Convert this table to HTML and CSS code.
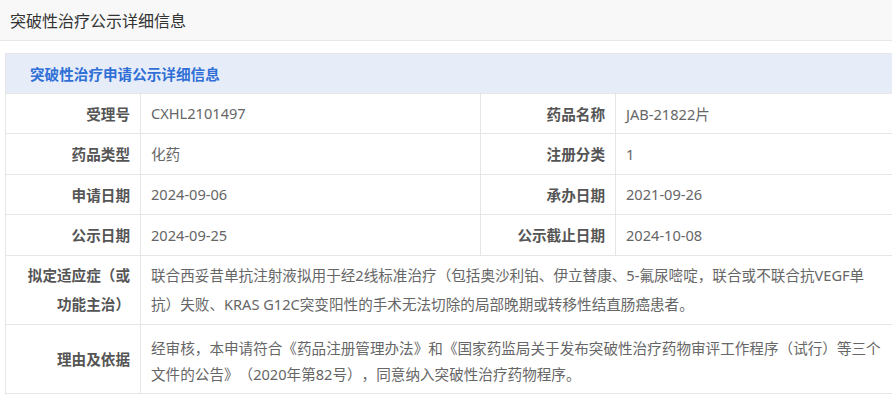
FILE: index.html
```html
<!DOCTYPE html>
<html lang="zh-CN">
<head>
<meta charset="utf-8">
<title>突破性治疗公示详细信息</title>
<link rel="stylesheet" href="styles.css">
</head>
<body>
<header class="topbar">突破性治疗公示详细信息</header>
<main class="content">
  <table class="detail">
    <colgroup>
      <col class="c-label">
      <col class="c-value">
      <col class="c-label">
      <col class="c-value2">
    </colgroup>
    <thead>
      <tr><th colspan="4" class="caption">突破性治疗申请公示详细信息</th></tr>
    </thead>
    <tbody>
      <tr class="row">
        <td class="label">受理号</td><td class="value">CXHL2101497</td>
        <td class="label">药品名称</td><td class="value">JAB-21822片</td>
      </tr>
      <tr class="row">
        <td class="label">药品类型</td><td class="value">化药</td>
        <td class="label">注册分类</td><td class="value">1</td>
      </tr>
      <tr class="row">
        <td class="label">申请日期</td><td class="value">2024-09-06</td>
        <td class="label">承办日期</td><td class="value">2021-09-26</td>
      </tr>
      <tr class="row">
        <td class="label">公示日期</td><td class="value">2024-09-25</td>
        <td class="label">公示截止日期</td><td class="value">2024-10-08</td>
      </tr>
      <tr class="row-multi">
        <td class="label">拟定适应症（或功能主治）</td>
        <td class="value" colspan="3">联合西妥昔单抗注射液拟用于经2线标准治疗（包括奥沙利铂、伊立替康、5-氟尿嘧啶，联合或不联合抗VEGF单<br>抗）失败、KRAS G12C突变阳性的手术无法切除的局部晚期或转移性结直肠癌患者。</td>
      </tr>
      <tr class="row-reason">
        <td class="label">理由及依据</td>
        <td class="value" colspan="3">经审核，本申请符合《药品注册管理办法》和《国家药监局关于发布突破性治疗药物审评工作程序（试行）等三个文件的公告》（2020年第82号），同意纳入突破性治疗药物程序。</td>
      </tr>
    </tbody>
  </table>
</main>
</body>
</html>
```

FILE: styles.css
```css
html, body {
  margin: 0;
  padding: 0;
  overflow: hidden;
  background: #ffffff;
}
body {
  font-family: "Noto Sans", "Noto Sans CJK SC", sans-serif;
  color: #333;
  text-spacing-trim: space-all;
}
.topbar {
  height: 40px;
  display: flex;
  align-items: center;
  padding-left: 10px;
  background: #f8f8f8;
  border-bottom: 1px solid #e8e8e8;
  font-size: 16px;
  color: #333;
}
.content {
  padding: 12px 0 0 5px;
}
.detail {
  width: 892px;
  border-collapse: collapse;
  table-layout: fixed;
  font-size: 14.6px;
}
.c-label { width: 135px; }
.c-value { width: 340px; }
.c-value2 { width: 282px; }
.detail td, .detail th {
  border: 1px solid #e6e6e6;
}
.caption {
  height: 38.5px;
  padding: 0 0 0 24px;
  text-align: left;
  background: #e6edf9;
  border-color: #dde4ef;
  color: #2f6fd6;
  font-weight: bold;
  font-size: 14.6px;
}
.label {
  text-align: right;
  font-weight: bold;
  color: #555;
  padding: 0 10px;
}
.value {
  text-align: left;
  color: #666;
  padding: 0 10px;
}
.row td {
  height: 39.5px;
}
.row-multi td {
  padding-top: 5px;
  padding-bottom: 5px;
  line-height: 29px;
}
.row-reason td {
  line-height: 26px;
}
.row-reason .value {
  padding-top: 10px;
  padding-bottom: 6px;
}
```
